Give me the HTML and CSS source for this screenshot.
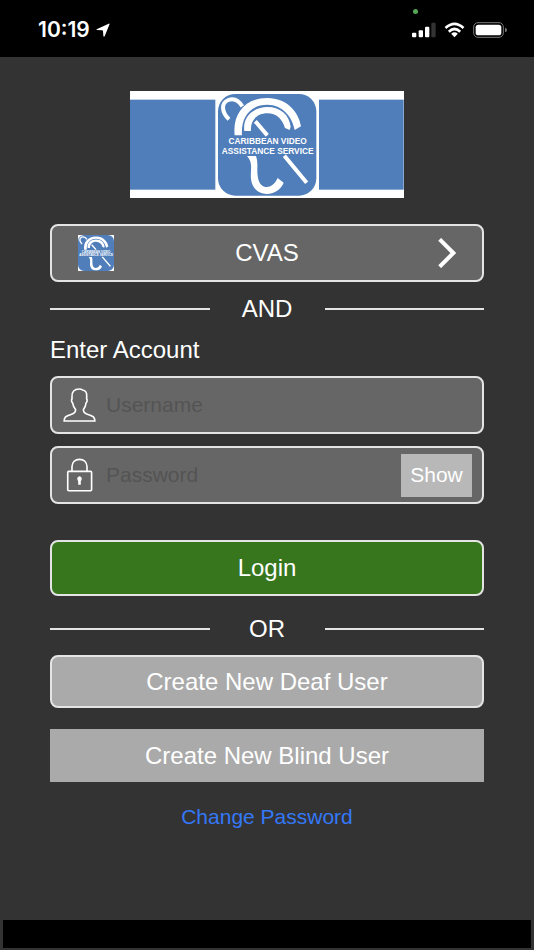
FILE: index.html
```
<!DOCTYPE html>
<html lang="en">
<head>
<meta charset="utf-8">
<meta name="viewport" content="width=device-width, initial-scale=1">
<title>CVAS Login</title>
<link rel="stylesheet" href="styles.css">
</head>
<body>
<header class="status">
  <div class="status-side">
    <time class="clock">10:19</time>
    <svg class="arrow" viewBox="0 0 42 42" aria-hidden="true"><path d="M2 19L38 2Q42 0 40 5L26 40Q23 43 22 38L21 23Q20 22 18 22L3 21Q0 20 2 19Z"/></svg>
  </div>
  <div class="status-side">
    <svg class="signal" viewBox="0 0 72 48" aria-hidden="true">
      <rect x="0" y="32" width="13" height="14" rx="3"/>
      <rect x="20" y="25" width="13" height="21" rx="3"/>
      <rect x="39" y="14" width="13" height="32" rx="3"/>
      <rect class="dim" x="58" y="2" width="13" height="44" rx="3"/>
    </svg>
    <svg class="wifi" viewBox="0 0 62 48" aria-hidden="true">
      <path class="wave" d="M4 18Q31-7 58 18M14 29Q31 13 48 29"/>
      <path d="M21 35Q31 27 41 35L31 46Z"/>
    </svg>
    <svg class="battery" viewBox="0 0 102 48" aria-hidden="true">
      <rect class="shell" x="2" y="2" width="89" height="44" rx="13"/>
      <rect x="8" y="8" width="77" height="32" rx="8"/>
      <path class="cap" d="M96 17Q102 18 102 24T96 31Z"/>
    </svg>
  </div>
  <span class="camera-dot"></span>
</header>

<main class="login">
  <svg class="banner" viewBox="18 18 822 321" role="img" aria-label="Caribbean Video Assistance Service">
    <rect class="white" x="18" y="18" width="822" height="321"/>
    <rect class="blue" x="18" y="44" width="256" height="270"/>
    <rect class="blue" x="585" y="44" width="254" height="270"/>
    <g id="emblem">
      <rect class="blue" x="282" y="27" width="295" height="305" rx="52"/>
      <path class="white" d="M332 151C325 85 365 39 430 39C490 39 524 82 531 124L512 135C505 95 475 59 430 59C380 59 350 95 354 151Z"/>
      <path class="white" d="M361 138C355 95 388 66 430 66C470 66 496 90 500 125L497 135L483 129C475 103 458 85 430 85C400 85 378 105 381 138Z"/>
      <path class="white" d="M369 213H396C404 235 397 255 402 278C408 315 445 315 461 279L479 293C462 338 388 341 381 283C378 255 389 235 369 213Z"/>
      <path class="cane" d="M315 103C293 82 290 54 313 45C332 38 345 48 355 64"/>
      <path class="cane" d="M394 109L430 151M481 212L548 293"/>
      <g class="emblem-text">
        <text x="431" y="178">CARIBBEAN VIDEO</text>
        <text x="431" y="206">ASSISTANCE SERVICE</text>
      </g>
    </g>
  </svg>

  <button class="box provider" type="button">
    <svg class="provider-logo" viewBox="282 27 295 305" preserveAspectRatio="none" aria-hidden="true">
      <rect class="white" x="282" y="27" width="295" height="305"/>
      <use href="#emblem"/>
    </svg>
    <span>CVAS</span>
    <svg class="chevron" viewBox="0 0 54 90" aria-hidden="true"><path d="M5 4L46 45L5 86"/></svg>
  </button>

  <div class="divider"><span>AND</span></div>

  <form class="account">
    <h1>Enter Account</h1>
    <div class="box field">
      <label for="username" aria-label="Username">
        <svg class="field-icon" viewBox="0 0 100 104" aria-hidden="true"><path d="M49 3C34 3 26 12 27 27V34C24 36 26 43 29 46C31 57 34 61 38 66C39 75 33 78 24 81C8 86 3 89 3 101H97C97 89 92 86 76 81C67 78 61 75 62 66C66 61 69 57 70 46C73 43 75 36 72 34V24C73 12 65 7 59 6Q55 3 49 3Z"/></svg>
      </label>
      <input id="username" type="text" placeholder="Username">
    </div>
    <div class="box field">
      <label for="password" aria-label="Password">
        <svg class="field-icon" viewBox="0 0 100 104" aria-hidden="true"><rect x="14" y="41" width="73" height="59" rx="3"/><path d="M27 41V27C27 12 37 4 50 4S73 12 73 27V41"/><path class="keyhole" d="M44 67A7 7 0 1 1 56 67L54 71V82H46V71Z"/></svg>
      </label>
      <input id="password" type="password" placeholder="Password">
      <button class="show" type="button">Show</button>
    </div>
    <button class="box submit" type="submit">Login</button>
  </form>

  <div class="divider"><span>OR</span></div>

  <button class="create outlined" type="button">Create New Deaf User</button>
  <button class="create" type="button">Create New Blind User</button>
  <a class="change" href="#">Change Password</a>
</main>
<footer class="bottom-bar"></footer>
</body>
</html>
```

FILE: styles.css
```
* {
  box-sizing: border-box;
}

body {
  margin: 0;
  min-height: 100vh;
  display: flex;
  flex-direction: column;
  background: #333;
  color: #fff;
  font-family: "Liberation Sans", Arial, sans-serif;
  font-size: 24px;
  line-height: 28px;
}

button,
input {
  font: inherit;
  color: inherit;
  margin: 0;
  border: 0;
  border-radius: 0;
}

svg {
  display: block;
  fill: #fff;
}

.blue {
  fill: #4f7eba;
}

.white {
  fill: #fff;
}

.cane {
  fill: none;
  stroke: #fff;
  stroke-width: 12;
}

.emblem-text {
  fill: #fff;
  font-family: "Liberation Sans", Arial, sans-serif;
  font-size: 25px;
  font-weight: 700;
  text-anchor: middle;
}

/* Status bar */
.status {
  position: relative;
  display: flex;
  justify-content: space-between;
  height: 57px;
  padding: 2px 27px 0 38px;
  background: #000;
}

.status-side {
  display: flex;
  align-items: center;
  gap: 8px;
}

.clock {
  font-family: Inter, sans-serif;
  font-size: 21px;
  font-weight: 600;
}

.arrow {
  width: 14px;
  height: 14px;
  margin-left: -2px;
}

.signal {
  width: 24px;
  height: 16px;
}

.dim {
  fill: #333;
}

.wifi {
  width: 21px;
  height: 16px;
}

.wave {
  fill: none;
  stroke: #fff;
  stroke-width: 8;
}

.battery {
  width: 34px;
  height: 16px;
}

.shell {
  fill: none;
  stroke: #777;
  stroke-width: 3;
}

.cap {
  fill: #777;
}

.camera-dot {
  position: absolute;
  top: 9px;
  right: 116px;
  width: 5px;
  height: 5px;
  border-radius: 50%;
  background: #55a855;
}

/* Login screen */
.login {
  display: flex;
  flex-direction: column;
  padding: 34px 50px 0;
}

.banner {
  width: 274px;
  height: 107px;
  align-self: center;
  margin-bottom: 26px;
}

.box {
  height: 58px;
  border: 2px solid #e4e4e4;
  border-radius: 8px;
  background: #666;
}

.provider {
  display: grid;
  grid-template-columns: 1fr auto 1fr;
  align-items: center;
  padding: 0 26px;
}

.provider-logo {
  width: 36px;
  height: 36px;
}

.chevron {
  width: 18px;
  height: 30px;
  justify-self: end;
  fill: none;
  stroke: #fff;
  stroke-width: 12;
}

.divider {
  display: flex;
  align-items: center;
  height: 28px;
  margin: 13px 0;
}

.divider span {
  width: 115px;
  text-align: center;
}

.divider::before,
.divider::after {
  content: "";
  flex: 1;
  height: 2px;
  background: #e4e4e4;
}

.account {
  display: flex;
  flex-direction: column;
  gap: 12px;
}

.account h1 {
  margin: 0;
  font-size: 24px;
  font-weight: 400;
}

.field {
  display: flex;
  align-items: center;
  padding: 0 10px 0 11px;
}

.field-icon {
  width: 33px;
  height: 34px;
  fill: none;
  stroke: #fff;
  stroke-width: 5;
}

.keyhole {
  fill: #fff;
  stroke: none;
}

.field input {
  flex: 1;
  min-width: 0;
  height: 54px;
  padding: 0 10px;
  background: none;
  outline: 0;
  font-size: 21px;
}

.field input::placeholder {
  color: #545454;
  opacity: 1;
}

.show {
  width: 71px;
  height: 43px;
  padding: 0;
  background: #b8b8b8;
  font-size: 21px;
}

.submit {
  height: 56px;
  margin-top: 24px;
  background: #38761d;
}

.account + .divider {
  margin: 19px 0 12px;
}

.create {
  height: 53px;
  margin-bottom: 21px;
  background: #aaa;
}

.outlined {
  border: 2px solid #e4e4e4;
  border-radius: 8px;
}

.change {
  align-self: center;
  color: #3478f6;
  font-size: 21px;
  text-decoration: none;
}

.bottom-bar {
  height: 28px;
  margin: auto 3px 2px;
  background: #000;
}
```
